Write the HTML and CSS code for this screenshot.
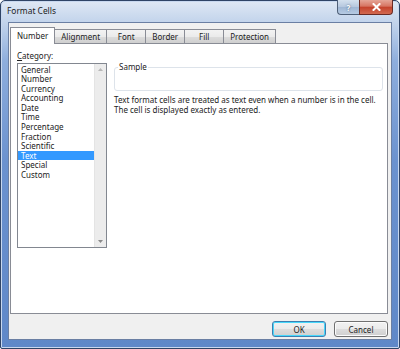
FILE: index.html
```html
<!DOCTYPE html>
<html>
<head>
<meta charset="utf-8">
<link rel="stylesheet" href="styles.css">
</head>
<body>
<div class="window">
  <div class="titlebar">
    <span class="title">Format Cells</span>
    <div class="caption">
      <div class="cap help">?</div>
      <div class="cap close">
        <svg width="9" height="8" viewBox="0 0 9 8"><path d="M1.5 1 L7.5 7 M7.5 1 L1.5 7" stroke="#fff" stroke-width="2" stroke-linecap="square"/></svg>
      </div>
    </div>
  </div>
  <div class="client">
    <div class="tabs">
      <div class="tab active">Number</div>
      <div class="tab">Alignment</div>
      <div class="tab">Font</div>
      <div class="tab">Border</div>
      <div class="tab">Fill</div>
      <div class="tab">Protection</div>
    </div>
    <div class="panel">
      <div class="left">
        <div class="label"><u>C</u>ategory:</div>
        <div class="listbox">
          <ul class="items">
            <li>General</li>
            <li>Number</li>
            <li>Currency</li>
            <li>Accounting</li>
            <li>Date</li>
            <li>Time</li>
            <li>Percentage</li>
            <li>Fraction</li>
            <li>Scientific</li>
            <li class="selected">Text</li>
            <li>Special</li>
            <li>Custom</li>
          </ul>
          <div class="scrollbar">
            <svg width="5" height="3" viewBox="0 0 5 3"><path d="M0 3 L2.5 0 L5 3 Z" fill="#b8b8b8"/></svg>
            <svg width="5" height="3" viewBox="0 0 5 3"><path d="M0 0 L2.5 3 L5 0 Z" fill="#8a8a8a"/></svg>
          </div>
        </div>
      </div>
      <div class="right">
        <fieldset class="sample"><legend>Sample</legend></fieldset>
        <p class="desc">Text format cells are treated as text even when a number is in the cell.<br>The cell is displayed exactly as entered.</p>
      </div>
    </div>
    <div class="buttons">
      <button class="btn default">OK</button>
      <button class="btn">Cancel</button>
    </div>
  </div>
</div>
</body>
</html>
```
FILE: styles.css
```css
* { box-sizing: border-box; }
html, body { margin: 0; padding: 0; }
body {
  width: 400px;
  height: 349px;
  background: #ffffff;
  font-family: "Noto Sans", "Open Sans", sans-serif;
  font-size: 8px;
  color: #222222;
}
.window {
  width: 400px;
  height: 349px;
  display: flex;
  flex-direction: column;
  border: 1px solid #2f4466;
  border-radius: 5px 5px 2px 2px;
  padding: 0 7px 8px 7px;
  background: linear-gradient(to bottom, #dfe8f4 0px, #c4d5ec 20px, #8eaedd 60px, #6b92cf 160px, #5f88c8 100%);
  box-shadow: inset 0 0 0 1px #c8d8ef;
}
.titlebar {
  height: 21px;
  display: flex;
  align-items: flex-start;
  margin: 0 -1px;
}
.title {
  margin-top: 4px;
  font-size: 8.4px;
  color: #1a1a1a;
}
.caption {
  margin-left: auto;
  display: flex;
  margin-top: -1px;
}
.cap {
  height: 15px;
  display: flex;
  align-items: center;
  justify-content: center;
  border: 1px solid #4f6078;
  border-top: none;
}
.help {
  width: 22px;
  border-radius: 0 0 0 4px;
  border-right: none;
  color: #ffffff;
  font-weight: bold;
  font-size: 8px;
  background: linear-gradient(to bottom, #d4e0ee 0%, #b5c7de 50%, #9fb6d4 51%, #b7cbe3 100%);
  text-shadow: 0 0 2px #3b5577;
}
.close {
  width: 34px;
  border-radius: 0 0 4px 0;
  background: linear-gradient(to bottom, #e5a597 0%, #d67461 45%, #c4412b 50%, #d26a50 100%);
  border-color: #6b2b24;
}
.client {
  flex: 1;
  display: flex;
  flex-direction: column;
  background: #f0f0f0;
  border: 1px solid #6a7fa3;
}
.tabs {
  display: flex;
  align-items: flex-end;
  padding-top: 4px;
  padding-left: 1px;
  position: relative;
  z-index: 1;
}
.tab {
  height: 14px;
  min-width: 40px;
  display: flex;
  align-items: center;
  justify-content: center;
  padding: 0 6px;
  border: 1px solid #898c95;
  border-bottom: none;
  margin-left: -1px;
  background: linear-gradient(to bottom, #f3f3f3 0%, #ebebeb 50%, #dddddd 51%, #cfcfcf 100%);
  color: #222222;
}
.tab:first-child { margin-left: 0; }
.tab.active {
  height: 17px;
  margin-bottom: -1px;
  background: #ffffff;
  padding-bottom: 1px;
}
.panel {
  height: 271px;
  margin: 0 3px 0 1px;
  background: #ffffff;
  border: 1px solid #898c95;
  display: flex;
  padding: 7px 4px 0 6px;
}
.left {
  width: 90px;
  display: flex;
  flex-direction: column;
}
.label {
  line-height: 10px;
  height: 10px;
}
.label u { text-decoration: underline; }
.listbox {
  margin-top: 2px;
  height: 185px;
  border: 1px solid #828790;
  display: flex;
}
.items {
  list-style: none;
  margin: 0;
  padding: 0.5px 0 0 0;
  flex: 1;
}
.items li {
  line-height: 9.6px;
  height: 9.6px;
  padding-left: 3px;
  white-space: nowrap;
}
.items li.selected {
  background: #3399ff;
  color: #ffffff;
}
.scrollbar {
  width: 12px;
  background: #ececec;
  border-left: 1px solid #e4e4e4;
  display: flex;
  flex-direction: column;
  justify-content: space-between;
  align-items: center;
  padding: 4px 0 4px 0;
}
.right {
  flex: 1;
  margin-left: 7px;
  display: flex;
  flex-direction: column;
}
.sample {
  margin: 11px 0 0 0;
  padding: 0;
  height: 29px;
  border: 1px solid #dde3ea;
  border-radius: 3px;
}
.sample legend {
  padding: 0 1px;
  margin-left: 3px;
  line-height: 10px;
  font-size: 8px;
}
.desc {
  margin: 4px 0 0 0;
  line-height: 10px;
}
.buttons {
  display: flex;
  justify-content: flex-end;
  gap: 8px;
  padding: 7px 3px 0 0;
}
.btn {
  height: 16px;
  width: 54px;
  padding: 0;
  font-family: inherit;
  font-size: 8px;
  color: #222222;
  border: 1px solid #707070;
  border-radius: 3px;
  background: linear-gradient(to bottom, #f2f2f2 0%, #ebebeb 50%, #dddddd 51%, #cfcfcf 100%);
  box-shadow: inset 0 0 0 1px #fcfcfc;
}
.btn.default {
  border-color: #3c7fb1;
  box-shadow: inset 0 0 0 1px #48d8fb;
}
```
